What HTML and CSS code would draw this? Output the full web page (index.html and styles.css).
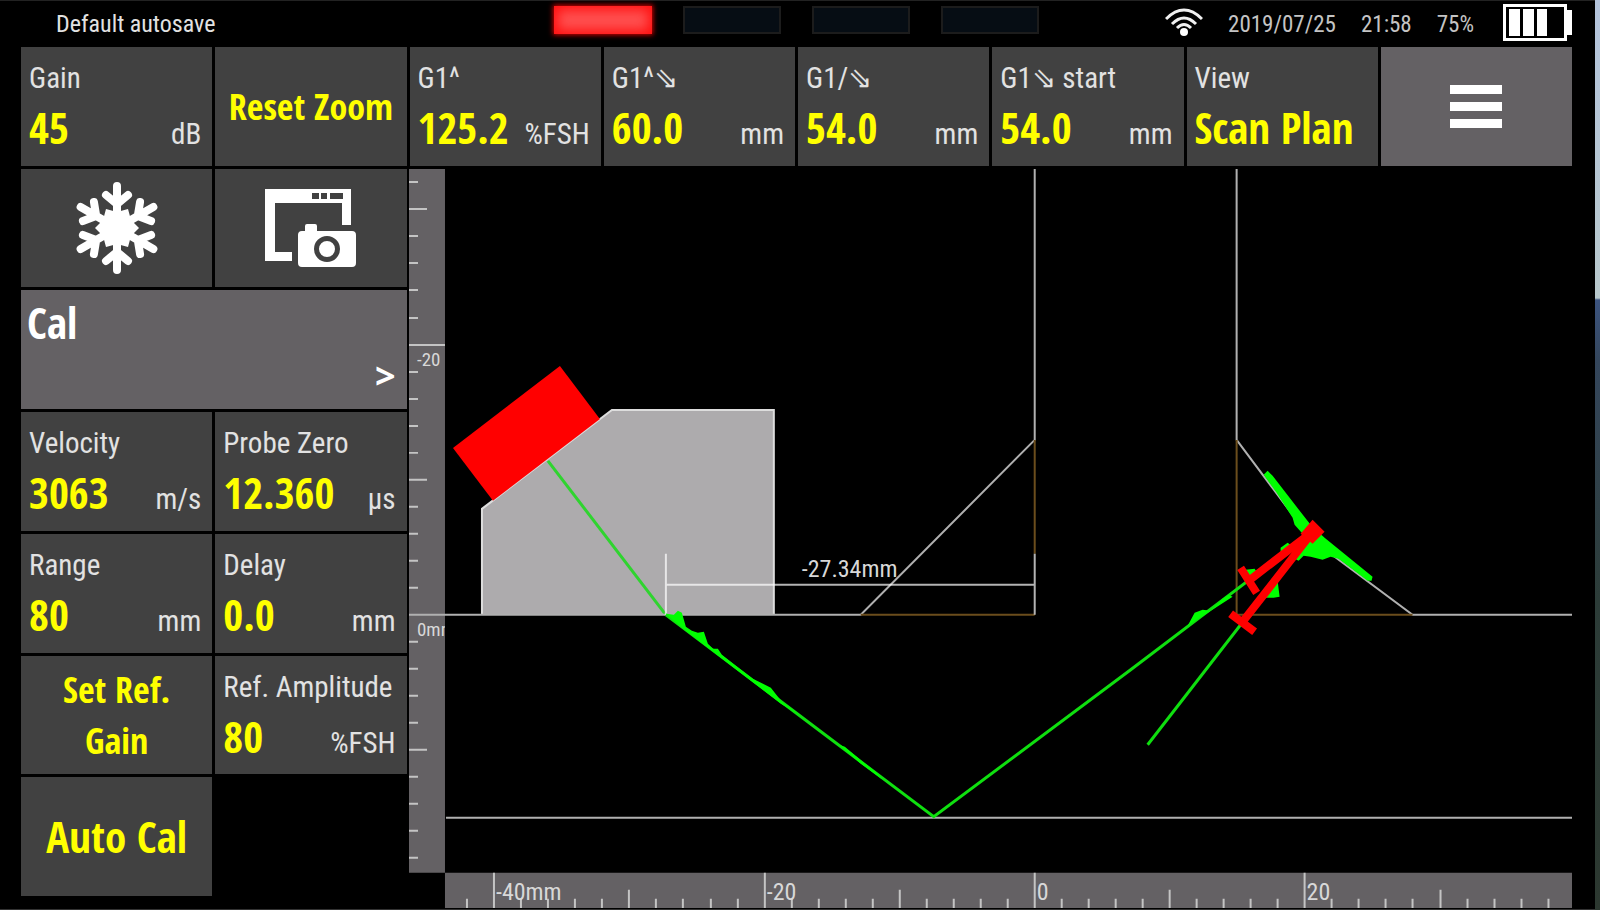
FILE: index.html
```html
<!DOCTYPE html>
<html lang="en">
<head>
    <meta charset="UTF-8">
    <title>Scan Plan</title>
    <link rel="stylesheet" href="styles.css">
</head>
<body>
<div class="screen">
    <header class="status">
        <span class="file">Default autosave</span>
        <div class="leds">
            <i class="led on"></i>
            <i class="led"></i>
            <i class="led"></i>
            <i class="led"></i>
        </div>
        <div class="info">
            <svg class="wifi" width="38" height="28" viewBox="0 0 38 28">
                <g fill="none" stroke="#f0f0f0" stroke-width="3">
                    <path d="M1 11Q19 -7 37 11"/>
                    <path d="M7 16Q19 4 31 16"/>
                    <path d="M12 20Q19 13 26 20"/>
                </g>
                <circle cx="19" cy="24" r="4" fill="#fff"/>
            </svg>
            <span>2019/07/25</span>
            <span>21:58</span>
            <span>75%</span>
            <svg class="battery" width="69" height="37" viewBox="0 0 69 37">
                <rect x="1.5" y="1.5" width="61" height="34" fill="none" stroke="#fff" stroke-width="3"/>
                <path fill="#fff" d="M64 6h5v25h-5zM6 5h11v27h-11zM20 5h11v27h-11zM34 5h10v27h-10z"/>
            </svg>
        </div>
    </header>

    <main class="panel">
        <!-- top row -->
        <button class="tile">
            <span class="label">Gain</span>
            <span class="reading"><b>45</b><span>dB</span></span>
        </button>
        <button class="tile action wide">Reset Zoom</button>
        <button class="tile">
            <span class="label">G1^</span>
            <span class="reading"><b>125.2</b><span>%FSH</span></span>
        </button>
        <button class="tile">
            <span class="label">G1^⇘</span>
            <span class="reading"><b>60.0</b><span>mm</span></span>
        </button>
        <button class="tile">
            <span class="label">G1/⇘</span>
            <span class="reading"><b>54.0</b><span>mm</span></span>
        </button>
        <button class="tile">
            <span class="label">G1⇘ start</span>
            <span class="reading"><b>54.0</b><span>mm</span></span>
        </button>
        <button class="tile">
            <span class="label">View</span>
            <span class="reading"><b>Scan Plan</b></span>
        </button>
        <button class="tile menu" aria-label="Menu">
            <i></i>
            <i></i>
            <i></i>
        </button>

        <!-- left side -->
        <button class="tile icon" aria-label="Freeze">
            <svg width="92" height="92" viewBox="-46 -46 92 92">
                <defs>
                    <path id="arm" d="M0 0V-42M-11 -33L0 -24L11 -33"/>
                </defs>
                <g fill="none" stroke="#fff" stroke-width="8" stroke-linecap="round">
                    <use href="#arm"/>
                    <use href="#arm" transform="rotate(60)"/>
                    <use href="#arm" transform="rotate(120)"/>
                    <use href="#arm" transform="rotate(180)"/>
                    <use href="#arm" transform="rotate(240)"/>
                    <use href="#arm" transform="rotate(300)"/>
                </g>
                <path fill="#fff" d="M22 0L14 8L11 19L0 16L-11 19L-14 8L-22 0L-14 -8L-11 -19L0 -16L11 -19L14 -8Z"/>
            </svg>
        </button>
        <button class="tile icon" aria-label="Screenshot">
            <svg width="92" height="80" viewBox="0 0 92 80">
                <path fill="#fff" d="M0 1H86V37H77V15H10V64H27V73H0Z"/>
                <path fill="#414141" d="M47 5h7v6h-7zM56 5h6v6h-6zM65 5h13v6h-13z"/>
                <path fill="#fff" d="M37 43H40V38Q40 36 42 36H50Q52 36 52 38V43H87Q91 43 91 47V75Q91 79 87 79H37Q33 79 33 75V47Q33 43 37 43Z"/>
                <circle cx="62" cy="61" r="10.5" fill="#fff" stroke="#414141" stroke-width="5"/>
            </svg>
        </button>
        <button class="tile cal">
            <span>Cal</span>
            <span class="more">&gt;</span>
        </button>
        <button class="tile left">
            <span class="label">Velocity</span>
            <span class="reading"><b>3063</b><span>m/s</span></span>
        </button>
        <button class="tile right">
            <span class="label">Probe Zero</span>
            <span class="reading"><b>12.360</b><span>µs</span></span>
        </button>
        <button class="tile left">
            <span class="label">Range</span>
            <span class="reading"><b>80</b><span>mm</span></span>
        </button>
        <button class="tile right">
            <span class="label">Delay</span>
            <span class="reading"><b>0.0</b><span>mm</span></span>
        </button>
        <button class="tile left action">Set Ref. Gain</button>
        <button class="tile right">
            <span class="label">Ref. Amplitude</span>
            <span class="reading"><b>80</b><span>%FSH</span></span>
        </button>
        <button class="tile left action large">Auto Cal</button>

        <!-- scan plan -->
        <div class="plot">
            <svg viewBox="408 168 1164 740">
                <!-- rulers -->
                <path class="ruler" d="M408 168H444V872H408ZM444 872H1572V908H444Z"/>

                <!-- wedge and probe -->
                <path class="wedge" d="M481 614V508L611 409H773V614"/>
                <path fill="#f00" d="M452 447L559 365L599 418L492 500Z"/>
                <path class="beam" stroke-opacity="0.8" d="M547 460L665 614"/>

                <!-- part outline -->
                <path class="line" d="M408 614H860L1034 439V168M445 817H1572M1236 168V439L1310 538L1412 614H1572"/>
                <path class="weld" d="M860 614H1034M1034 553V439M1236 439V614H1412"/>

                <!-- distance from the weld -->
                <path class="measure" d="M665 553V614M665 584H1034M1034 553V614"/>
                <text class="distance" x="801" y="576">-27.34mm</text>

                <!-- sound path -->
                <path class="beam" d="M665 614L933 816L1130 669L1312 531L1147 744"/>
                <path class="echo" d="M665 613L673 614L677 610L681 612L685 626L691 630L697 632L703 631L707 643L712 648L717 648L721 654L735 665L752 678L770 687L781 701L800 715L780 703L750 680L720 657L685 630Z"/>
                <path class="echo" d="M838 744L844 746L862 761L876 772L882 779L860 763Z"/>
                <path class="echo" d="M1187 625L1194 612L1202 609L1210 610L1222 598L1228 594L1232 596Z"/>
                <path class="echo" d="M1245 569L1254 568L1258 574L1248 578ZM1280 552V547L1287 542L1294 547L1284 556ZM1264 597L1277 580L1279 596L1273 597Z"/>
                <path class="echo" d="M1263 474L1267 470L1272 475L1310 524L1324 537L1372 576L1371 580L1367 580L1338 558L1330 556L1322 559L1310 556L1303 555L1298 560L1294 558L1302 533L1294 524L1292 517L1276 492Z"/>

                <!-- gate -->
                <g class="gate">
                    <path d="M1313 530L1248 580M1240 567L1256 592"/>
                    <path d="M1313 530L1242 621M1230 613L1254 631"/>
                </g>
                <path fill="#f00" d="M1312 519L1324 531L1312 543L1300 533Z"/>

                <!-- depth ticks, every 2 mm -->
                <path class="tick" d="M408 181h9M408 208h18M408 235h9M408 262h9M408 289h9M408 317h9M408 344h36M408 371h9M408 398h9M408 425h9M408 452h9M408 479h18M408 506h9M408 533h9M408 560h9M408 587h9M408 641h9M408 668h9M408 695h9M408 722h9M408 749h18M408 776h9M408 803h9M408 830h9M408 857h9"/>
                <text class="depth" x="416" y="365">-20</text>
                <svg x="408" y="614" width="36" height="40">
                    <text class="depth" x="8" y="21">0mm</text>
                </svg>

                <!-- distance ticks, every 2 mm -->
                <path class="tick" d="M466 908v-10M493 908v-36M520 908v-10M547 908v-10M574 908v-10M601 908v-10M628 908v-19M655 908v-10M682 908v-10M710 908v-10M737 908v-10M764 908v-36M791 908v-10M818 908v-10M845 908v-10M872 908v-10M899 908v-19M926 908v-10M953 908v-10M980 908v-10M1007 908v-10M1034 908v-36M1061 908v-10M1088 908v-10M1115 908v-10M1142 908v-10M1169 908v-19M1196 908v-10M1223 908v-10M1250 908v-10M1277 908v-10M1304 908v-36M1331 908v-10M1358 908v-10M1385 908v-10M1412 908v-10M1440 908v-19M1467 908v-10M1494 908v-10M1521 908v-10M1548 908v-10"/>
                <text class="scale" x="495" y="899">-40mm</text>
                <text class="scale" x="766" y="899">-20</text>
                <text class="scale" x="1036" y="899">0</text>
                <text class="scale" x="1306" y="899">20</text>
            </svg>
        </div>
    </main>
</div>
</body>
</html>
```
FILE: styles.css
```css
* {
    box-sizing: border-box;
    margin: 0;
    padding: 0;
}
body {
    background: linear-gradient(#b4c4dc, #b8c8cc 298px, #3c5480 300px, #34465c 360px, #2c3c38 600px, #2c3830);
    font-family: "Roboto Condensed", Roboto, "Open Sans", sans-serif;
    color: #e2e2e2;
}
svg {
    display: block;
}
.screen {
    display: flex;
    flex-direction: column;
    min-height: 100vh;
    margin-right: 5px;
    padding: 0 23px 0 21px;
    background: #000;
    border-top: 1px solid #222;
    border-bottom: 1px solid #333;
}

/* status bar */
.status {
    display: grid;
    grid-template-columns: 1fr auto 1fr;
    align-items: center;
    height: 46px;
    font-size: 24px;
}
.file {
    padding-left: 35px;
}
.leds {
    display: flex;
    gap: 31px;
    align-self: start;
    padding-top: 5px;
}
.led {
    width: 98px;
    height: 28px;
    background: #060d14;
    border: 2px solid #1c1c1c;
}
.led.on {
    background: #ff5050;
    border: 0;
    box-shadow: inset 0 0 12px 4px #f11, 0 0 5px 1px #d00;
}
.info {
    display: flex;
    justify-content: flex-end;
    align-items: center;
    gap: 25px;
    color: #c4c4c4;
    font-size: 23px;
}
.battery {
    margin: 0 0 4px 4px;
}
.wifi {
    margin-bottom: 4px;
}

/* tiles */
.panel {
    flex: 1;
    display: grid;
    grid-template-columns: repeat(8, 1fr);
    grid-template-rows: repeat(7, minmax(118px, 1fr)) 10px;
    gap: 3px;
}
.tile {
    display: flex;
    flex-direction: column;
    min-width: 0;
    padding: 14px 11px 0 8px;
    border: 0;
    background: #414141;
    color: inherit;
    font-family: inherit;
    font-size: 29px;
    line-height: 34px;
    text-align: left;
    white-space: nowrap;
    cursor: pointer;
}
.left {
    grid-column: 1;
}
.right {
    grid-column: 2;
}
.reading {
    display: flex;
    justify-content: space-between;
    align-items: baseline;
    width: 100%;
    margin-top: 3px;
}
.reading b,
.action,
.cal {
    font-family: "Open Sans Condensed", "Open Sans", sans-serif;
    font-weight: bold;
}
.reading b {
    font-size: 43px;
    line-height: 60px;
    color: #ff0;
}
.action {
    align-items: center;
    justify-content: center;
    padding: 0 20px;
    font-size: 36px;
    line-height: 51px;
    color: #ff0;
    text-align: center;
    white-space: normal;
}
.wide {
    padding: 0;
}
.large {
    font-size: 43px;
}
.icon {
    align-items: center;
    justify-content: center;
    padding: 0;
}
.menu {
    align-items: center;
    justify-content: center;
    gap: 8px;
    padding: 0;
    background: #646164;
}
.menu i {
    width: 52px;
    height: 9px;
    background: #fff;
}
.cal {
    grid-column: 1 / 3;
    justify-content: space-between;
    padding: 8px 11px 8px 6px;
    background: #646164;
    color: #fff;
    font-size: 43px;
    line-height: 50px;
}
.more {
    align-self: flex-end;
    font-family: "Open Sans", sans-serif;
    font-size: 36px;
}

/* plot */
.plot {
    grid-column: 3 / -1;
    grid-row: 2 / -1;
    margin-left: -1px;
}
.ruler {
    fill: #646164;
}
.wedge {
    fill: #adabad;
    stroke: #ddd;
    stroke-width: 2;
}
.line,
.measure {
    fill: none;
    stroke: #b0b0b0;
    stroke-width: 2;
}
.measure {
    stroke: #fff;
    stroke-opacity: 0.7;
}
.weld {
    fill: none;
    stroke: #6b4d1c;
    stroke-width: 2;
}
.beam {
    fill: none;
    stroke: #0fdf0f;
    stroke-width: 3;
}
.echo {
    fill: #0f0;
}
.gate {
    fill: none;
    stroke: #f00;
    stroke-width: 8;
}
.tick {
    stroke: #c4c4c4;
    stroke-width: 2;
}
.distance,
.scale {
    fill: #d8d8d8;
    font-size: 24px;
}
.depth {
    fill: #d8d8d8;
    font-size: 19px;
}
```
